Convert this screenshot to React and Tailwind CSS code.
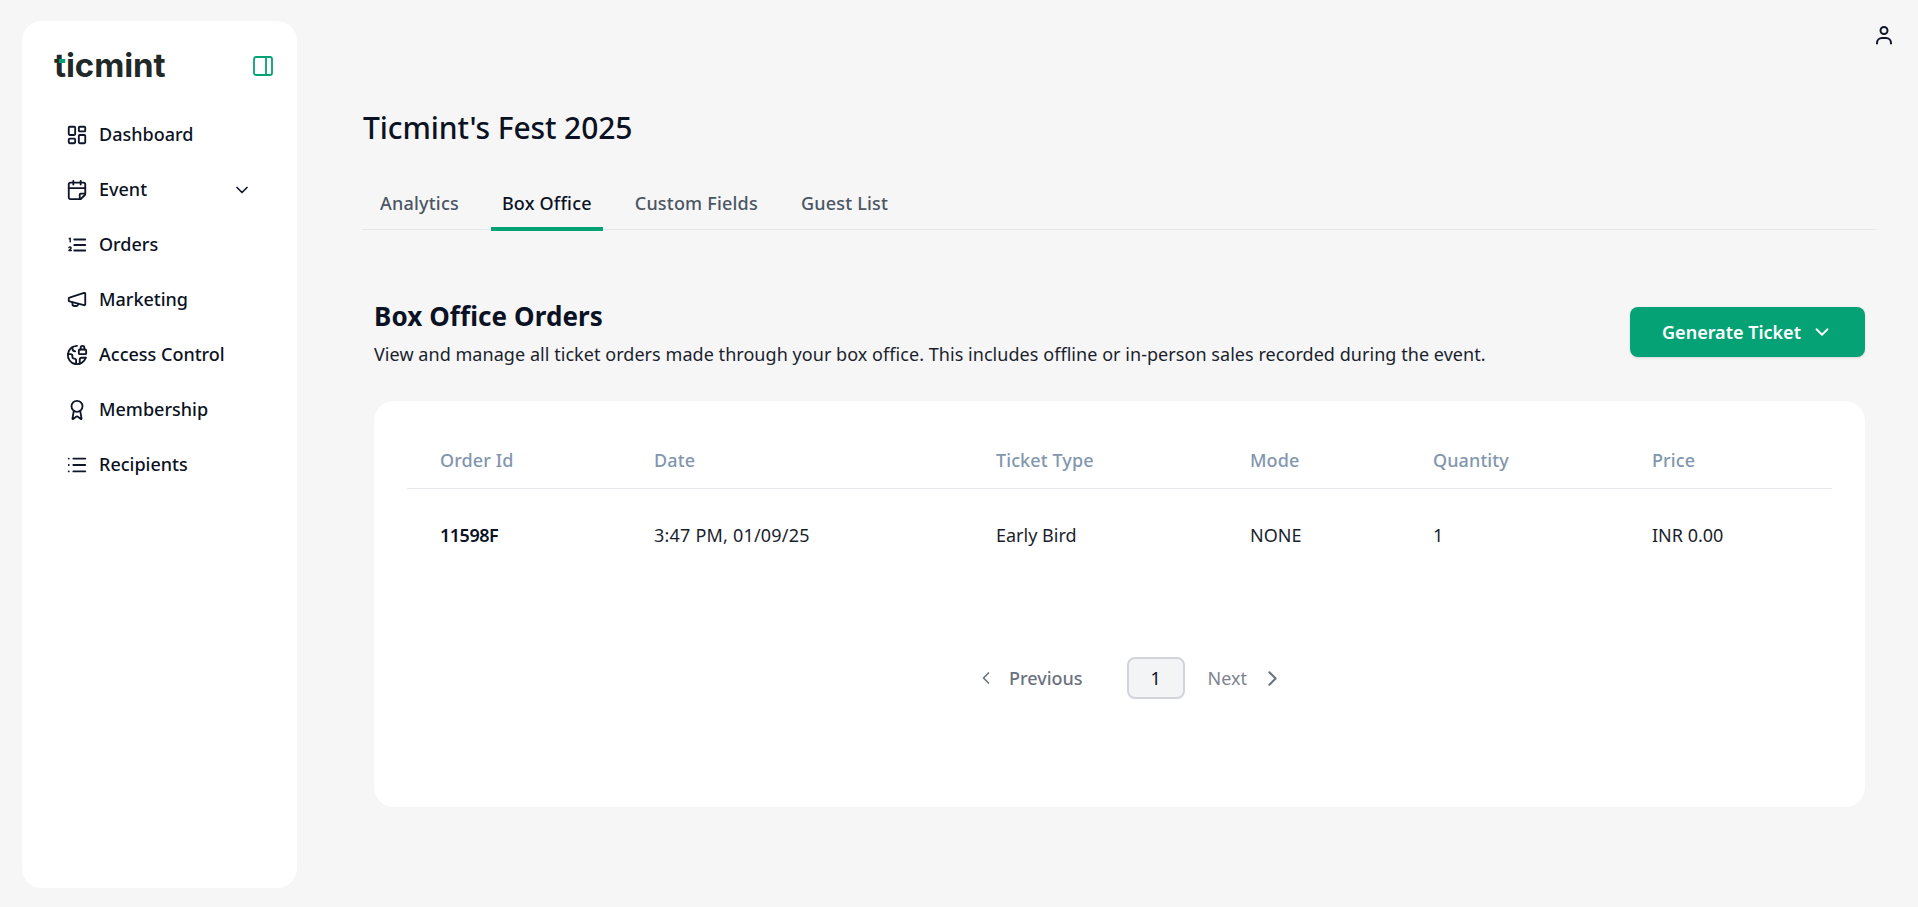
import React from 'react';
import {
  LayoutDashboard,
  CalendarFold,
  ChevronDown,
  ChevronLeft,
  ChevronRight,
  EarthLock,
  Award,
  List,
  PanelRight,
} from 'lucide-react';

// lucide's versions of these don't match the picture, so they are drawn here
const OrdersIcon = ({ className, strokeWidth }) => (
  <svg viewBox="0 0 24 24" fill="none" stroke="currentColor" strokeWidth={strokeWidth} strokeLinecap="round" strokeLinejoin="round" className={className}>
    <path d="M9 6h12M9 12h12M9 18h12" />
    <path d="M3.4 5.2 4.6 4.6v4" strokeWidth={1.5} />
    <path d="M3.2 14.8c.4-.9 2.4-.8 2.4.4 0 1-1.6 1.6-2.4 2.8h2.6" strokeWidth={1.5} />
  </svg>
);

const MegaphoneIcon = ({ className, strokeWidth }) => (
  <svg viewBox="0 0 24 24" fill="none" stroke="currentColor" strokeWidth={strokeWidth} strokeLinecap="round" strokeLinejoin="round" className={className}>
    <path d="M21 5.2v11.6a1 1 0 0 1-1.3.9L3.8 13.6a1 1 0 0 1-.8-1v-2.2a1 1 0 0 1 .8-1L19.700 4.300a1 1 0 0 1 1.300.900z" />
    <path d="M7 14.600v1.400a2.500 2.500 0 0 0 2.500 2.500h1.500a2.500 2.500 0 0 0 2.500-2" />
  </svg>
);

const UserIcon = ({ className }) => (
  <svg viewBox="0 0 24 24" fill="none" stroke="currentColor" strokeWidth={2} strokeLinecap="round" strokeLinejoin="round" className={className}>
    <circle cx="12" cy="7.500" r="3.500" />
    <path d="M5 20.500v-.500a5 5 0 0 1 5-5h4a5 5 0 0 1 5 5v.500" />
  </svg>
);

const navItems = [
  { label: 'Dashboard', icon: LayoutDashboard },
  { label: 'Event', icon: CalendarFold, caret: true },
  { label: 'Orders', icon: OrdersIcon },
  { label: 'Marketing', icon: MegaphoneIcon },
  { label: 'Access Control', icon: EarthLock },
  { label: 'Membership', icon: Award },
  { label: 'Recipients', icon: List },
];

const tabs = ['Analytics', 'Box Office', 'Custom Fields', 'Guest List'];

const columns = [
  { label: 'Order Id', width: 'w-[214px]' },
  { label: 'Date', width: 'w-[342px]' },
  { label: 'Ticket Type', width: 'w-[254px]' },
  { label: 'Mode', width: 'w-[183px]' },
  { label: 'Quantity', width: 'w-[219px]' },
  { label: 'Price', width: '' },
];

const Sidebar = () => (
  <aside className="ml-[22px] mt-[21px] h-[867px] w-[275px] shrink-0 rounded-[20px] bg-white">
    <div className="flex h-[64px] items-start justify-between pl-[32px] pr-[22px] pt-[25px]">
      <div className="relative h-[40px] font-['Inter',sans-serif] text-[33px] font-bold leading-[38px] tracking-[-0.1px] text-[#1f2a28]">
        ticmint
        <span className="absolute left-[5px] top-[13px] h-[4px] w-[6px] bg-[#05a275]" />
      </div>
      <PanelRight className="mt-[8px] h-[24px] w-[24px] text-[#05a275]" strokeWidth={1.8} />
    </div>
    <nav className="mt-[22px] flex flex-col pl-[44px] pr-[45px]">
      {navItems.map(({ label, icon: Icon, caret }) => (
        <div key={label} className="flex h-[55px] items-center">
          <Icon className="h-[22px] w-[22px] text-[#0f1629]" strokeWidth={2} />
          <span className="ml-[11px] flex-1 text-[18px] font-medium text-[#0b1224]">{label}</span>
          {caret && <ChevronDown className="h-[20px] w-[20px] text-[#0f1629]" strokeWidth={2} />}
        </div>
      ))}
    </nav>
  </aside>
);

const OrdersCard = () => (
  <div className="mt-[34px] h-[406px] rounded-[20px] bg-white px-[33px] pt-[33px]">
    <table className="w-full table-fixed border-collapse text-left">
      <thead>
        <tr className="border-b border-[#e5e7eb]">
          {columns.map((col) => (
            <th key={col.label} className={`h-[54px] pl-[33px] pb-[1px] text-[18px] font-medium tracking-[0.1px] text-[#8296ae] ${col.width}`}>
              {col.label}
            </th>
          ))}
        </tr>
      </thead>
      <tbody>
        <tr className="text-[18px] text-[#1a1f2e]">
          <td className="h-[94px] pl-[33px] font-semibold tracking-[-0.5px] text-[#0b1224]">11598F</td>
          <td className="pl-[33px] tracking-[0.2px]">3:47 PM, 01/09/25</td>
          <td className="pl-[33px]">Early Bird</td>
          <td className="pl-[33px]">NONE</td>
          <td className="pl-[33px]">1</td>
          <td className="pl-[33px]">INR 0.00</td>
        </tr>
      </tbody>
    </table>
    <div className="mt-[75px] flex items-center justify-center pl-[22px]">
      <ChevronLeft className="h-[20px] w-[20px] text-[#6b7280]" strokeWidth={2} />
      <span className="ml-[13px] text-[18px] font-medium text-[#6b7280]">Previous</span>
      <span className="ml-[44px] flex h-[42px] w-[58px] items-center justify-center rounded-[8px] border-2 border-[#d1d5db] bg-[#f3f4f6] text-[18px] text-[#0b1224]">
        1
      </span>
      <span className="ml-[23px] text-[18px] text-[#7d8490]">Next</span>
      <ChevronRight className="ml-[13px] h-[25px] w-[25px] text-[#6b7280]" strokeWidth={2} />
    </div>
  </div>
);

const App = () => {
  return (
    <div className="flex h-[907px] overflow-hidden bg-[#f6f6f6] font-['Noto_Sans',sans-serif]">
      <Sidebar />
      <main className="min-w-0 flex-1 pl-[65px] pr-[42px]">
        <div className="flex justify-end pt-[23px]">
          <UserIcon className="mr-[-20px] h-[24px] w-[24px] text-[#0f1629]" />
        </div>
        <h1 className="mt-[60px] pl-[1px] text-[30px] font-medium leading-[42px] tracking-[-0.1px] text-[#0b1224]">Ticmint's Fest 2025</h1>
        <div className="mt-[33px] flex h-[48px] items-start border-b border-[#e5e7eb] pl-[7px]">
          {tabs.map((tab) => (
            <div
              key={tab}
              className={`h-[49px] px-[11px] pt-[8px] mr-[21px] text-[18px] font-medium tracking-[0.2px] ${
                tab === 'Box Office' ? 'border-b-[4px] border-[#05a275] text-[#0b1224]' : 'text-[#4b5563]'
              }`}
            >
              {tab}
            </div>
          ))}
        </div>
        <div className="ml-[12px] mr-[11px] mt-[68px]">
          <div className="flex items-center justify-between">
            <div>
              <h2 className="text-[26px] font-bold leading-[36px] tracking-[0.1px] text-[#0b1224]">Box Office Orders</h2>
              <p className="mt-[7px] text-[18px] leading-[26px] tracking-[0.05px] text-[#1a1f2e]">
                View and manage all ticket orders made through your box office. This includes offline or in-person sales recorded during the event.
              </p>
            </div>
            <button className="mb-[1px] flex h-[50px] w-[235px] items-center justify-center rounded-[8px] bg-[#05a275] text-[18px] font-semibold text-white shadow-sm">
              Generate Ticket
              <ChevronDown className="ml-[10px] h-[22px] w-[22px]" strokeWidth={2} />
            </button>
          </div>
          <OrdersCard />
        </div>
      </main>
    </div>
  );
};

export default App;
